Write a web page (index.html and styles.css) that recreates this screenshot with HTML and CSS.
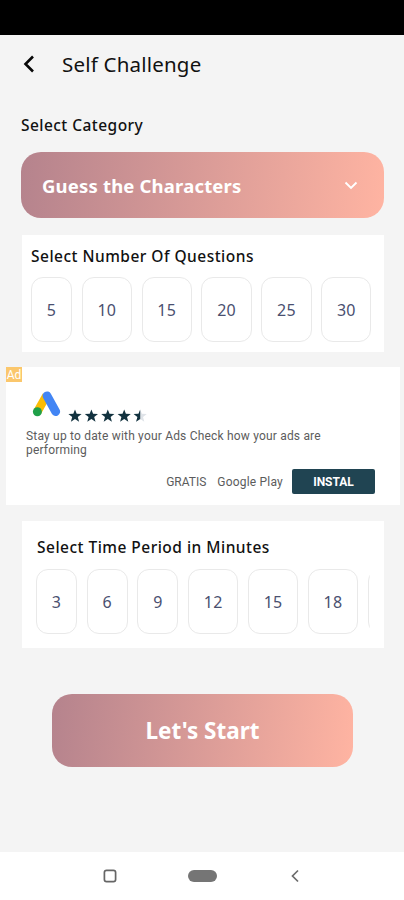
FILE: index.html
```html
<!DOCTYPE html>
<html lang="en">
<head>
<meta charset="utf-8">
<title>Self Challenge</title>
<link rel="stylesheet" href="styles.css">
</head>
<body>
<div class="status"></div>
<header class="header">
  <svg class="back" viewBox="0 0 12 18" width="12" height="18"><path d="M10 1.500 2.500 9l7.500 7.500" fill="none" stroke="#080808" stroke-width="2.600"/></svg>
  <h1 class="title">Self Challenge</h1>
</header>
<main class="main">
  <h2 class="label">Select Category</h2>
  <div class="select">
    <span class="select-text">Guess the Characters</span>
    <svg viewBox="0 0 14 9" width="14" height="9"><path d="m1.500 1.500 5.500 5.500 5.500-5.500" fill="none" stroke="#fff" stroke-width="1.900"/></svg>
  </div>
  <section class="card questions">
    <h2 class="card-title">Select Number Of Questions</h2>
    <div class="chips">
      <span class="chip small">5</span><span class="chip">10</span><span class="chip">15</span><span class="chip">20</span><span class="chip">25</span><span class="chip">30</span>
    </div>
  </section>
  <section class="ad">
    <span class="badge">Ad</span>
    <div class="ad-top">
      <svg viewBox="0 0 30 28" width="30" height="28">
        <path d="M14.500 5.500 5.500 21.500" stroke="#fbbc04" stroke-width="8.600"/>
        <path d="M15 5.800 23.700 21.600" stroke="#4285f4" stroke-width="8.800" stroke-linecap="round"/>
        <circle cx="5.400" cy="21.700" r="4.500" fill="#20a049"/>
      </svg>
      <svg class="stars" viewBox="0 0 80 14" width="80" height="14">
        <defs>
          <path id="star" d="m7 .4 1.700 4.400 4.900.2-3.800 3 1.300 4.800L7 10.100l-4.100 2.700L4.200 8 .4 5l4.900-.2z"/>
          <clipPath id="half"><path d="M0 0h7v14H0z"/></clipPath>
        </defs>
        <g fill="#12323f"><use href="#star"/><use href="#star" x="16.400"/><use href="#star" x="32.800"/><use href="#star" x="49.200"/></g>
        <g transform="translate(65.200 0)"><use href="#star" fill="#dfe3e8"/><use href="#star" fill="#12323f" clip-path="url(#half)"/></g>
      </svg>
    </div>
    <p class="ad-copy">Stay up to date with your Ads Check how your ads are<br>performing</p>
    <div class="ad-actions"><span class="price">GRATIS</span><span class="store">Google Play</span><span class="install">INSTAL</span></div>
  </section>
  <section class="card minutes">
    <h2 class="card-title">Select Time Period in Minutes</h2>
    <div class="chips">
      <span class="chip small">3</span><span class="chip small">6</span><span class="chip small">9</span><span class="chip">12</span><span class="chip">15</span><span class="chip">18</span><span class="chip"></span>
    </div>
  </section>
  <div class="start"><span class="start-text">Let's Start</span></div>
</main>
<nav class="nav">
  <svg viewBox="0 0 14 14" width="14" height="14"><rect x="1.400" y="1.400" width="11.200" height="11.200" rx="2.200" fill="none" stroke="#666" stroke-width="1.700"/></svg>
  <span class="home"></span>
  <svg viewBox="0 0 8 14" width="8" height="14"><path d="M7 1.500 1.500 7 7 12.500" fill="none" stroke="#6c6c6c" stroke-width="1.700"/></svg>
</nav>
</body>
</html>
```
FILE: styles.css
```css
* { box-sizing: border-box; }
body {
  margin: 0;
  width: 404px;
  height: 900px;
  overflow: hidden;
  display: flex;
  flex-direction: column;
  background: #f4f4f4;
  color: #111;
  font-family: "Noto Sans", sans-serif;
}
h1, h2, p { margin: 0; white-space: nowrap; }
svg { display: block; flex: none; }
.status { height: 35px; background: #000; flex: none; }
.header {
  height: 59px;
  flex: none;
  display: flex;
  align-items: center;
  padding: 0 0 2px 23px;
}
.title {
  margin-left: 27px;
  font-size: 20.500px;
  font-weight: 400;
  line-height: 28px;
  letter-spacing: 0.200px;
}
.main {
  flex: 1;
  display: flex;
  flex-direction: column;
  padding: 20px 20px 0 21px;
}
.label { font-size: 15.500px; font-weight: 500; line-height: 22px; letter-spacing: 0.450px; }
.select {
  margin-top: 16px;
  height: 66px;
  border-radius: 20px;
  padding: 0 26px 0 21px;
  display: flex;
  align-items: center;
  justify-content: space-between;
  background: linear-gradient(96deg, #b5838d, #ffb4a2);
}
.select-text { font-size: 18.500px; font-weight: 700; color: #fff; white-space: nowrap; letter-spacing: 0.180px; }
.card { background: #fff; margin-left: 0.500px; }
.card-title { font-size: 15.500px; font-weight: 500; line-height: 22px; letter-spacing: 0.480px; }
.questions { margin-top: 17px; height: 117px; padding: 10px 12px 0 9.500px; }
.minutes { margin-top: 16px; height: 127px; padding: 15px 14px 0 14.500px; }
.chips { display: flex; gap: 9.700px; margin-top: 10px; overflow: hidden; }
.minutes .chips { margin-top: 11px; }
.minutes .card-title { padding-left: 1px; }
.chip {
  flex: none;
  width: 50.200px;
  height: 65px;
  border: 1px solid #e9e9e9;
  border-radius: 12px;
  display: flex;
  align-items: center;
  justify-content: center;
  font-size: 16px;
  letter-spacing: 0.200px;
  color: #4a5070;
}
.chip.small { width: 41px; }
.ad {
  position: relative;
  margin: 15px -16px 0 -15px;
  height: 138px;
  background: #fff;
  padding: 23px 25px 0 20px;
  font-family: Roboto, sans-serif;
  color: #5c5c5c;
}
.badge {
  position: absolute;
  left: 0;
  top: 0;
  width: 16px;
  height: 15px;
  background: #fbc76c;
  color: #fff;
  font-size: 12px;
  line-height: 17px;
  text-align: center;
}
.ad-top { display: flex; align-items: flex-end; padding-left: 6px; }
.stars { margin: 0 0 -5px 6px; }
.ad-copy { margin-top: 11px; font-size: 12px; line-height: 14px; letter-spacing: 0.190px; }
.ad-actions {
  margin-top: 12px;
  display: flex;
  align-items: center;
  justify-content: flex-end;
  font-size: 12px;
}
.store { margin-left: 11px; letter-spacing: 0.200px; }
.install {
  margin-left: 9px;
  width: 83px;
  height: 25px;
  border-radius: 2px;
  background: #204452;
  color: #fff;
  font-weight: 700;
  line-height: 26px;
  text-align: center;
}
.start {
  margin: 46px 31px 0 31px;
  height: 73px;
  border-radius: 20px;
  display: flex;
  align-items: center;
  justify-content: center;
  background: linear-gradient(96deg, #b5838d, #ffb4a2);
  color: #fff;
  font-size: 22.500px;
  font-weight: 700;
}
.nav {
  height: 48px;
  flex: none;
  background: #fff;
  display: flex;
  align-items: center;
  padding: 0 0 0 103px;
}
.home { width: 29px; height: 12px; border-radius: 6px; background: #757575; margin: 0 74px 0 71px; }
```
